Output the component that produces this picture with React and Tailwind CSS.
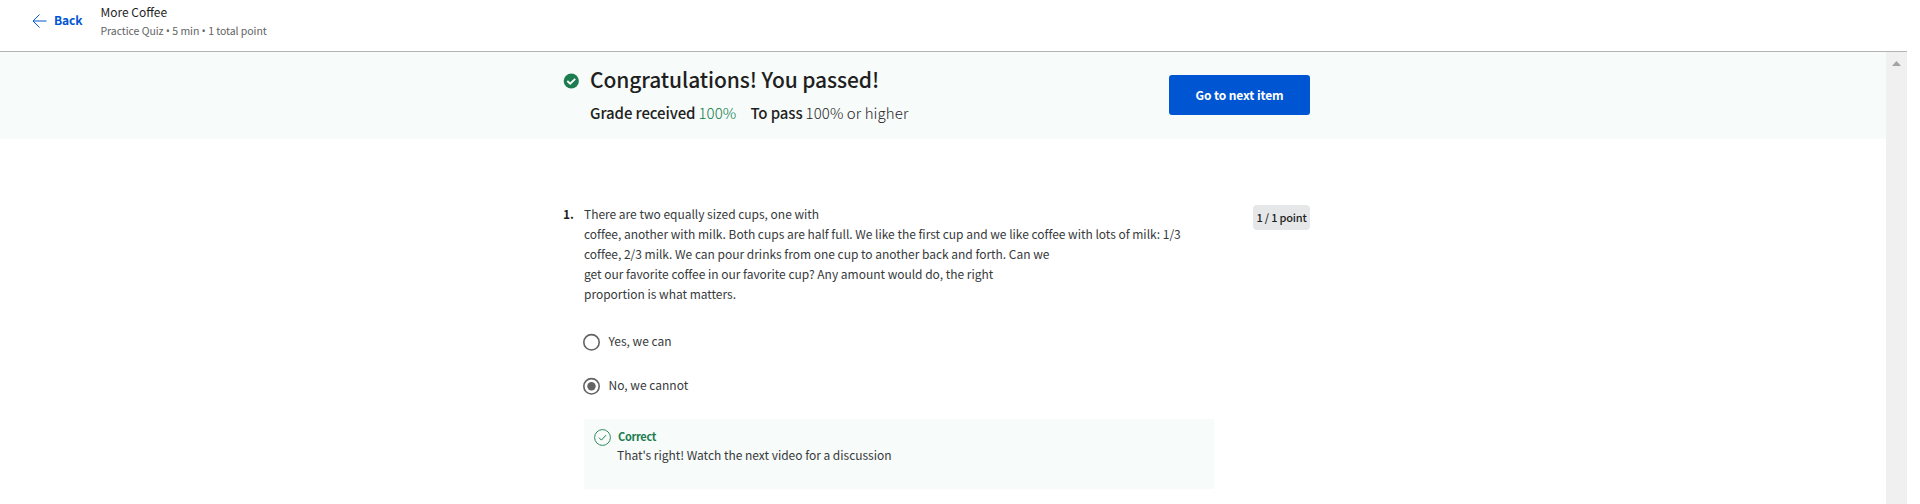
const questionLines = [
  "There are two equally sized cups, one with",
  "coffee, another with milk. Both cups are half full. We like the first cup and we like coffee with lots of milk: 1/3",
  "coffee, 2/3 milk. We can pour drinks from one cup to another back and forth. Can we",
  "get our favorite coffee in our favorite cup? Any amount would do, the right",
  "proportion is what matters.",
];

function Bullet() {
  return <span className="font-['Noto_Sans',sans-serif] text-[10px]"> • </span>;
}

function Header() {
  return (
    <header className="flex h-[52px] w-[1907px] border-b border-[#b4b4b4] bg-white">
      <a className="ml-8 mt-[11px] flex h-5 items-center text-[#0056d2]">
        <svg width="15" height="14" viewBox="0 0 15 14" fill="none" stroke="currentColor" strokeWidth="1">
          <path d="M7.5 0.5L1 7l6.5 6.5M1 7h13.5" />
        </svg>
        <span className="ml-[7px] mb-0.5 text-[12px] leading-5 font-bold tracking-[-0.1px]">Back</span>
      </a>
      <div className="ml-[18px] mt-[3px]">
        <div className="text-[12px] leading-[18px]">More Coffee</div>
        <div className="mt-px text-[10.5px] leading-[18px] tracking-[-0.05px] text-[#636363]">
          Practice Quiz<Bullet />5 min<Bullet />1 total point
        </div>
      </div>
    </header>
  );
}

function Banner() {
  return (
    <section className="flex h-[87px] bg-[#f7fbfa] pl-[563px]">
      <svg className="mt-[21px]" width="16" height="16" viewBox="0 0 16 16">
        <circle cx="8.3" cy="8" r="7.6" fill="#1d7c50" />
        <path d="M4.3 8l2.9 2.7 5-4.9" fill="none" stroke="#fff" strokeWidth="1.8" />
      </svg>
      <div className="ml-[11px] mt-[11px] w-[579px]">
        <h1 className="text-[21px] leading-8 font-medium tracking-[-0.1px]">Congratulations! You passed!</h1>
        <p className="mt-1.5 flex text-[15px] leading-6">
          <b className="font-medium tracking-[-0.1px]">Grade received</b>
          <span className="ml-[3px] font-light tracking-[0.1px] text-[#087a43]">100%</span>
          <b className="ml-[14px] font-medium tracking-[-0.1px]">To pass</b>
          <span className="ml-[3px] font-light tracking-[0.09px]">100% or higher</span>
        </p>
      </div>
      <button className="mt-[23px] flex h-10 w-[141px] items-center justify-center rounded-[3px] bg-[#0056d2] text-[12px] font-bold text-white">
        <span className="-mt-px tracking-[-0.1px]">Go to next item</span>
      </button>
    </section>
  );
}

function Option({ label, selected }) {
  return (
    <label className="flex h-11 items-center">
      <svg width="18" height="18" viewBox="0 0 18 18">
        <circle cx="8.5" cy="9.3" r="7.7" fill="none" stroke="#636363" strokeWidth="1.6" />
        {selected && <circle cx="8.5" cy="9.3" r="4.2" fill="#636363" />}
      </svg>
      <span className="mb-0.5 ml-[7.5px] text-[12px] leading-5 text-[#373a3c]">{label}</span>
    </label>
  );
}

function Question() {
  return (
    <section className="flex pl-[563px] pt-[65px]">
      <div className="w-5 text-[12px] leading-5 font-bold">1.</div>
      <div className="w-[631px]">
        <div className="ml-px text-[12px] leading-5 tracking-[-0.02px] text-[#373a3c]">
          {questionLines.map((line) => (
            <div key={line} className="whitespace-nowrap">{line}</div>
          ))}
        </div>
        <div className="mt-4">
          <Option label="Yes, we can" />
          <Option label="No, we cannot" selected />
        </div>
        <div className="ml-px mt-[11px] flex h-[70px] bg-[#f7fbfa]">
          <svg className="ml-[10px] mt-[10px]" width="17" height="17" viewBox="0 0 17 17" fill="none" stroke="#1d7c50">
            <circle cx="8.5" cy="8.5" r="7.9" strokeWidth="0.9" />
            <path d="M5 8.7l2.4 2.4 4.6-4.9" strokeWidth="1" />
          </svg>
          <div className="ml-[6px] mt-[7px]">
            <div className="ml-px text-[11px] leading-5 font-bold tracking-[-0.3px] text-[#1d7c50]">Correct</div>
            <div className="text-[12px] leading-[18px] tracking-[-0.02px] text-[#373a3c]">
              That's right! Watch the next video for a discussion
            </div>
          </div>
        </div>
      </div>
      <div className="ml-[39px] mt-px flex h-[25px] w-[57px] items-center justify-center rounded bg-[#e5e7e8] text-[11px] font-medium">
        <span className="whitespace-nowrap tracking-[-0.2px]">1 / 1 point</span>
      </div>
    </section>
  );
}

export default function App() {
  return (
    <div className="h-[504px] w-[1920px] overflow-hidden bg-white font-['Noto_Sans_CJK_SC',sans-serif] text-[#1f1f1f]">
      <Header />
      <div className="flex h-[452px] w-[1907px]">
        <main className="w-[1886px]">
          <Banner />
          <Question />
        </main>
        <div className="flex w-[21px] justify-center bg-[#f0f0f0] pt-[9px]">
          <svg width="9" height="5" viewBox="0 0 9 5" fill="#a3a3a3">
            <path d="M0 5L4.5 0L9 5z" />
          </svg>
        </div>
      </div>
    </div>
  );
}
